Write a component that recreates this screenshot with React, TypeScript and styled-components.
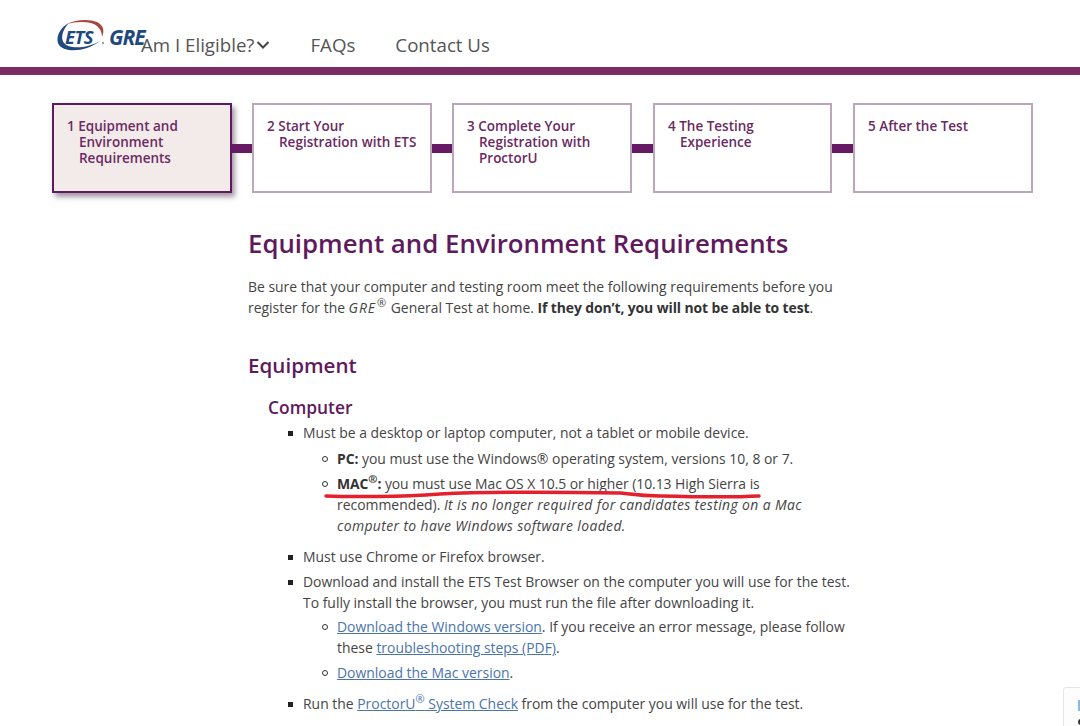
import React from "react";
import styled, { createGlobalStyle } from "styled-components";

const Global = createGlobalStyle`
  html, body { margin: 0; padding: 0; background: #fff; overflow: hidden; height: 726px; }
  body { font-family: "Open Sans", "Liberation Sans", sans-serif; color: #444; }
`;

const Page = styled.div`
  position: relative;
  width: 1080px;
  height: 726px;
  overflow: hidden;
`;

const Header = styled.header`
  display: flex;
  align-items: flex-start;
  height: 67px;
  padding-left: 56px;
  border-bottom: 8px solid #7b2d63;
`;

const Logo = styled.div`
  position: relative;
  width: 85px;
  height: 40px;
  margin-top: 17px;
  flex: none;
`;

const LogoSwoosh = styled.svg`
  position: absolute;
  left: 0;
  top: 2px;
`;

const LogoEts = styled.span`
  position: absolute;
  left: 9px;
  top: 9px;
  font: italic 700 18.5px/22px "Open Sans", sans-serif;
  letter-spacing: -0.5px;
  color: #1f4a7f;
`;

const LogoGre = styled.span`
  position: absolute;
  left: 53px;
  top: 8px;
  font: italic 700 21px/24px "Open Sans", sans-serif;
  letter-spacing: -1px;
  color: #1f4a7f;
`;

const Nav = styled.nav`
  display: flex;
  align-items: center;
  gap: 40px;
  height: 24px;
  margin-top: 33px;
`;

const NavItem = styled.a`
  display: flex;
  align-items: center;
  gap: 2px;
  font-size: 18.7px;
  line-height: 24px;
  color: #555;
`;

const Steps = styled.div`
  display: flex;
  align-items: center;
  margin: 28px 0 0 52px;
  width: 981px;
`;

const Step = styled.div<{ $active?: boolean; $w?: number }>`
  box-sizing: border-box;
  width: ${(p) => p.$w ?? 180}px;
  height: 90px;
  flex: none;
  padding: 13px 8px 0 25px;
  border: 2px solid ${(p) => (p.$active ? "#5f1a5f" : "#bda6ba")};
  background: ${(p) => (p.$active ? "#f3eaea" : "#fff")};
  box-shadow: ${(p) => (p.$active ? "3px 4px 5px rgba(90,70,90,.55)" : "none")};
  font-size: 13.5px;
  font-weight: 600;
  line-height: 16px;
  color: #6b2a63;
  text-indent: -12px;
`;

const Connector = styled.div<{ $w: number }>`
  width: ${(p) => p.$w}px;
  height: 9px;
  flex: none;
  background: #651a63;
`;

const Main = styled.main`
  width: 610px;
  margin: 32px 0 0 248px;
`;

const H1 = styled.h1`
  margin: 0;
  font-size: 25.8px;
  line-height: 36px;
  font-weight: 600;
  color: #5f1a5f;
`;

const Intro = styled.p`
  margin: 15px 0 0;
  font-size: 13.93px;
  line-height: 21px;
  color: #444;
  sup { font-size: 11px; line-height: 0; margin: 0 1px; }
`;

const H2 = styled.h2`
  margin: 33px 0 0;
  font-size: 20.6px;
  line-height: 28px;
  font-weight: 600;
  color: #5f1a5f;
`;

const H3 = styled.h3`
  margin: 16px 0 0 20px;
  font-size: 17.4px;
  line-height: 24px;
  font-weight: 600;
  color: #5f1a5f;
`;

const Outer = styled.ul`
  list-style: none;
  margin: 3px 0 0;
  padding: 0 0 0 55px;
  font-size: 13.93px;
  line-height: 21px;
  color: #444;
`;

const OuterItem = styled.li`
  position: relative;
  margin-bottom: 4px;
  &::before {
    content: "";
    position: absolute;
    left: -15px;
    top: 9px;
    width: 5px;
    height: 5px;
    background: #222;
  }
`;

const Inner = styled.ul<{ $top?: number }>`
  list-style: none;
  margin: ${(p) => p.$top ?? 5}px 0 10px;
  padding: 0 0 0 34px;
  width: 510px;
`;

const InnerItem = styled.li`
  position: relative;
  margin-bottom: 4px;
  &::before {
    content: "";
    position: absolute;
    left: -15px;
    top: 8px;
    box-sizing: border-box;
    width: 6px;
    height: 6px;
    border: 1px solid #333;
    border-radius: 50%;
  }
`;

const Strong = styled.strong`
  font-weight: 700;
  letter-spacing: -0.1px;
  color: #333;
  sup { font-size: 11px; line-height: 0; }
`;

const Em = styled.em`
  font-style: italic;
  letter-spacing: 0.38px;
`;

const GreEm = styled.em`
  font-style: italic;
  letter-spacing: 0.9px;
`;

const Tight = styled.span`
  letter-spacing: -0.05px;
`;

const Link = styled.a`
  color: #4a74ab;
  text-decoration: underline;
  sup { font-size: 11px; line-height: 0; }
`;

const Scribble = styled.svg`
  position: absolute;
  left: 0;
  top: 0;
  pointer-events: none;
`;

const Widget = styled.div`
  position: absolute;
  left: 1063px;
  top: 687px;
  width: 30px;
  height: 50px;
  box-sizing: border-box;
  border: 1px solid #e6e6e6;
  border-radius: 3px;
  background: #fdfdfd;
`;

const WidgetBlue = styled.div`
  position: absolute;
  left: 14px;
  top: 12px;
  width: 8px;
  height: 11px;
  background: #8db8de;
`;

const WidgetDot = styled.div`
  position: absolute;
  left: 14px;
  top: 31px;
  width: 5px;
  height: 6px;
  border-radius: 50%;
  background: #333;
`;

export default function App() {
  return (
    <Page>
      <Global />
      <Header>
        <Logo>
          <LogoSwoosh width="52" height="38" viewBox="0 0 52 38">
            <path d="M11 5 C20 0 34 0 41 3 C47 6 49 11 46 18 C46 11 42 6 35 4 C27 2 18 3 11 5Z" fill="#a8453f" />
            <path d="M13 4 C3 9 -1 20 3 26 C9 34 30 33 44 22 C32 29 14 31 8 24 C4 19 7 10 13 4Z" fill="#1f4a7f" />
            <circle cx="47" cy="24" r="1.2" fill="#9aa0a8" />
          </LogoSwoosh>
          <LogoEts>ETS</LogoEts>
          <LogoGre>GRE</LogoGre>
        </Logo>
        <Nav>
          <NavItem>
            Am I Eligible?
            <svg width="14" height="14" viewBox="0 0 14 14" fill="none" stroke="#444" strokeWidth="2">
              <path d="M1.5 4 L7 9.5 L12.5 4" />
            </svg>
          </NavItem>
          <NavItem>FAQs</NavItem>
          <NavItem>Contact Us</NavItem>
        </Nav>
      </Header>
      <Steps>
        <Step $active>1 Equipment and Environment Requirements</Step>
        <Connector $w={20} />
        <Step>2 Start Your Registration with ETS</Step>
        <Connector $w={20} />
        <Step>3 Complete Your Registration with ProctorU</Step>
        <Connector $w={21} />
        <Step $w={179}>4 The Testing Experience</Step>
        <Connector $w={21} />
        <Step>5 After the Test</Step>
      </Steps>
      <Main>
        <H1>Equipment and Environment Requirements</H1>
        <Intro>
          Be sure that your computer and testing room meet the following requirements before you register for the <GreEm>GRE</GreEm><sup>®</sup> General Test at home. <Strong>If they don’t, you will not be able to test</Strong>.
        </Intro>
        <H2>Equipment</H2>
        <H3>Computer</H3>
        <Outer>
          <OuterItem>
            Must be a desktop or laptop computer, not a tablet or mobile device.
            <Inner>
              <InnerItem><Strong>PC:</Strong> you must use the Windows® operating system, versions 10, 8 or 7.</InnerItem>
              <InnerItem>
                <Strong>MAC<sup>®</sup>:</Strong> <Tight>you must use Mac OS X 10.5 or higher (10.13 High Sierra is</Tight> recommended). <Em>It is no longer required for candidates testing on a Mac computer to have Windows software loaded.</Em>
              </InnerItem>
            </Inner>
          </OuterItem>
          <OuterItem>Must use Chrome or Firefox browser.</OuterItem>
          <OuterItem>
            Download and install the ETS Test Browser on the computer you will use for the test. To fully install the browser, you must run the file after downloading it.
            <Inner $top={3}>
              <InnerItem><Link>Download the Windows version</Link>. If you receive an error message, please follow these <Link>troubleshooting steps (PDF)</Link>.</InnerItem>
              <InnerItem><Link>Download the Mac version</Link>.</InnerItem>
            </Inner>
          </OuterItem>
          <OuterItem>Run the <Link>ProctorU<sup>®</sup> System Check</Link> from the computer you will use for the test.</OuterItem>
        </Outer>
      </Main>
      <Scribble width="1080" height="726" viewBox="0 0 1080 726">
        <path d="M326 496 C350 497 400 497 440 494 C480 492 560 492 620 493 C630 494 640 496 660 496 C700 497 740 497 759 496" fill="none" stroke="#e3202c" strokeWidth="3.5" strokeLinecap="round" />
      </Scribble>
      <Widget>
        <WidgetBlue />
        <WidgetDot />
      </Widget>
    </Page>
  );
}
